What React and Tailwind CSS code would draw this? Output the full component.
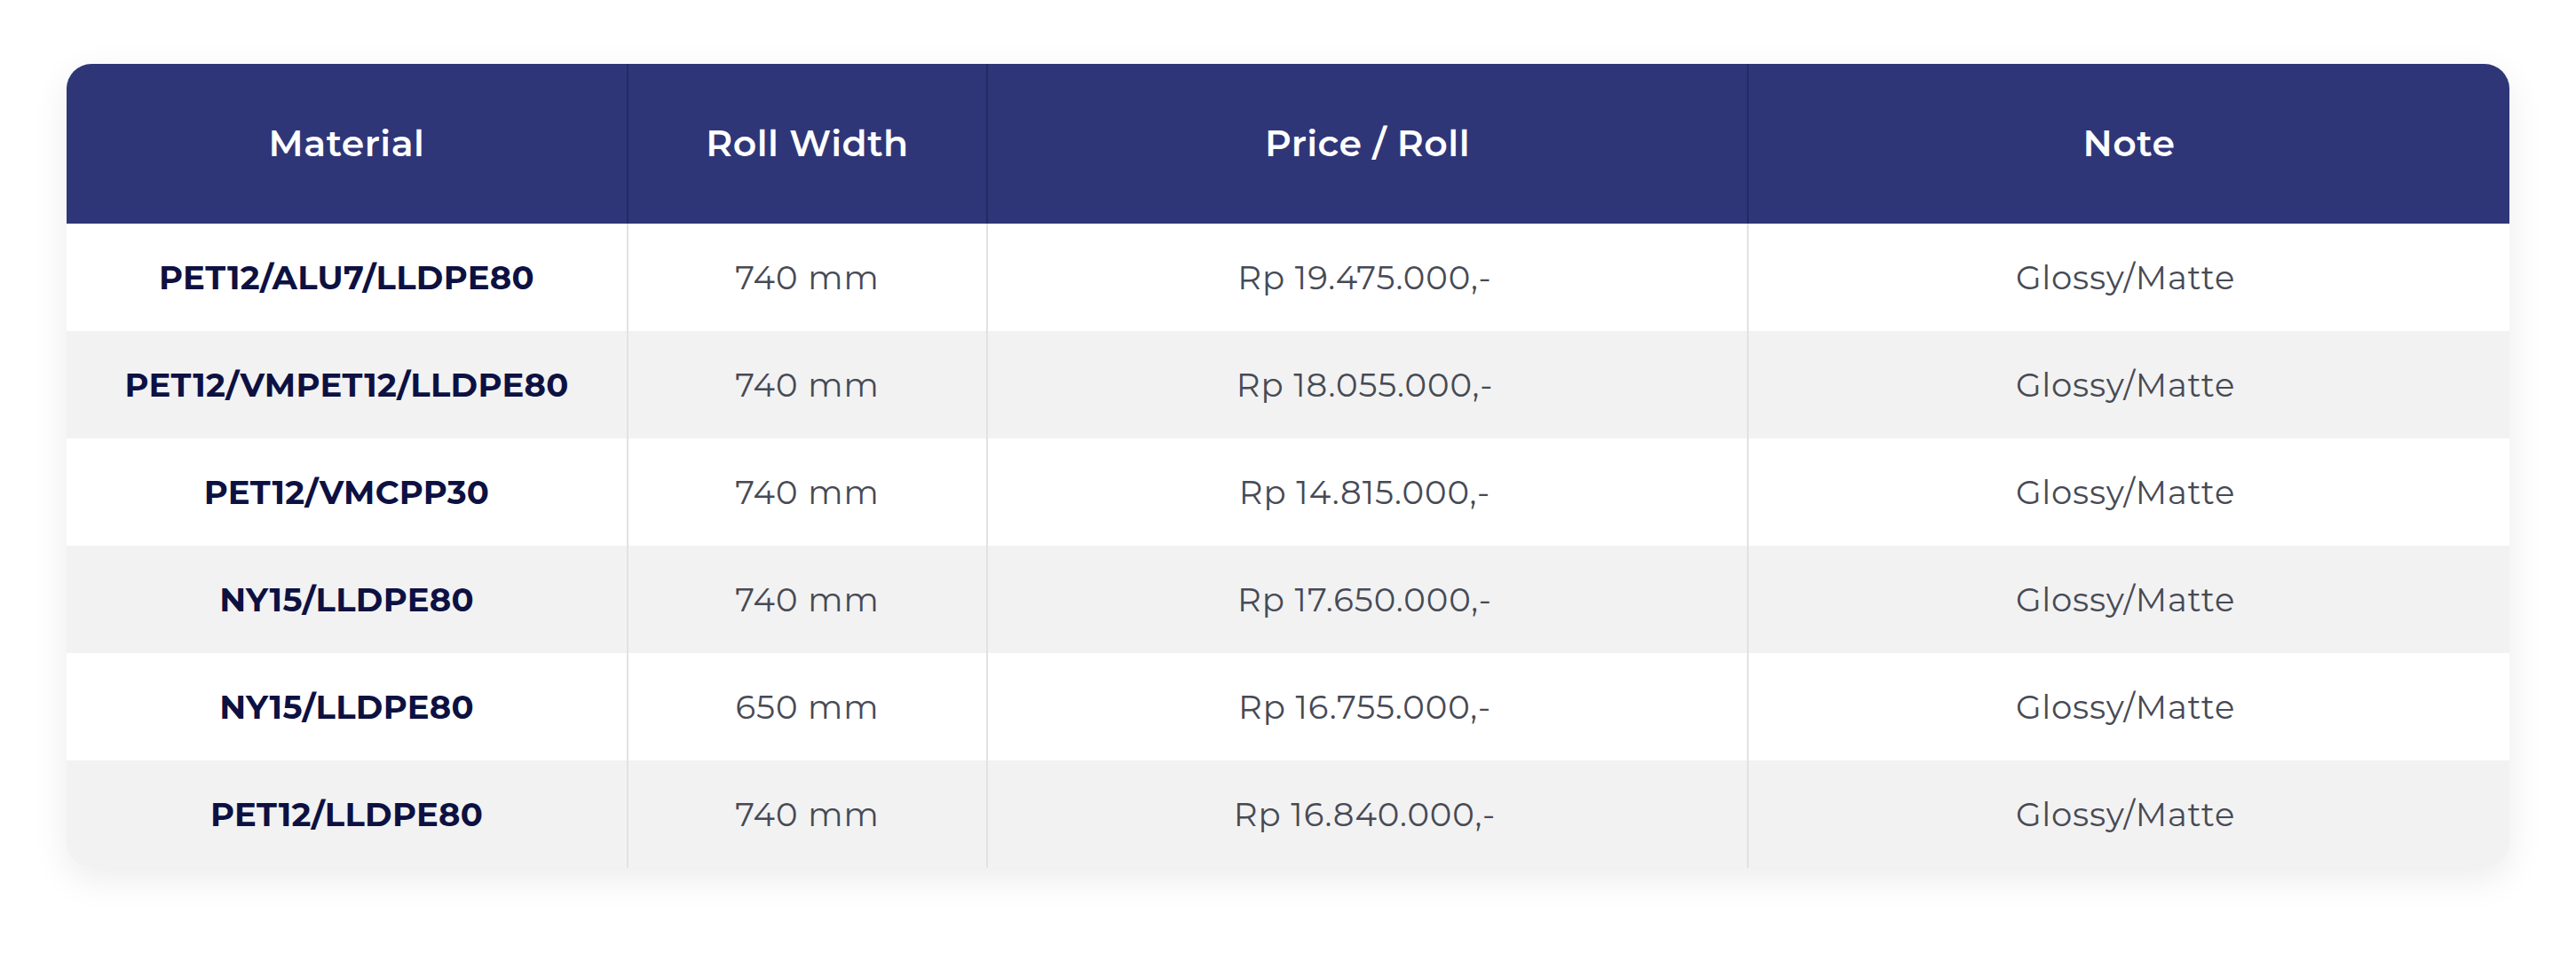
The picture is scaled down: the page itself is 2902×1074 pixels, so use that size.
import React from "react";

const rows = [
  { material: "PET12/ALU7/LLDPE80", width: "740 mm", price: "Rp 19.475.000,-", note: "Glossy/Matte" },
  { material: "PET12/VMPET12/LLDPE80", width: "740 mm", price: "Rp 18.055.000,-", note: "Glossy/Matte" },
  { material: "PET12/VMCPP30", width: "740 mm", price: "Rp 14.815.000,-", note: "Glossy/Matte" },
  { material: "NY15/LLDPE80", width: "740 mm", price: "Rp 17.650.000,-", note: "Glossy/Matte" },
  { material: "NY15/LLDPE80", width: "650 mm", price: "Rp 16.755.000,-", note: "Glossy/Matte" },
  { material: "PET12/LLDPE80", width: "740 mm", price: "Rp 16.840.000,-", note: "Glossy/Matte" },
];

const headers = ["Material", "Roll Width", "Price / Roll", "Note"];

const PriceTable = () => {
  return (
    <div className="rounded-[28px] overflow-hidden bg-white shadow-[0_12px_40px_rgba(0,0,0,0.08)]">
      <table className="w-full border-collapse table-fixed">
        <colgroup>
          <col className="w-[632px]" />
          <col className="w-[405px]" />
          <col className="w-[857px]" />
          <col />
        </colgroup>
        <thead>
          <tr className="bg-[#2f3678] h-[180px]">
            {headers.map((header, i) => (
              <th
                key={header}
                className={`text-white text-[41px] font-semibold tracking-[0.5px] text-center ${i > 0 ? "border-l-2 border-[#242a63]" : ""}`}
              >
                {header}
              </th>
            ))}
          </tr>
        </thead>
        <tbody>
          {rows.map((row, index) => (
            <tr key={index} className={`h-[121px] ${index % 2 === 1 ? "bg-[#f2f2f2]" : "bg-white"}`}>
              <td className="text-center text-[37px] font-bold text-[#0d1142] tracking-[0.3px]">{row.material}</td>
              <td className="text-center text-[37px] text-[#474a55] border-l-2 border-[#e2e2e2] tracking-[1px]">{row.width}</td>
              <td className="text-center text-[37px] text-[#474a55] border-l-2 border-[#e2e2e2] tracking-[1px] pr-[6px]">{row.price}</td>
              <td className="text-center text-[37px] text-[#474a55] border-l-2 border-[#e2e2e2] tracking-[0.8px] pr-[8px]">{row.note}</td>
            </tr>
          ))}
        </tbody>
      </table>
    </div>
  );
};

export default function App() {
  return (
    <div className="min-h-[1074px] bg-white px-[75px] pt-[72px] font-['Montserrat','Inter','Noto_Sans',sans-serif]">
      <PriceTable />
    </div>
  );
}
